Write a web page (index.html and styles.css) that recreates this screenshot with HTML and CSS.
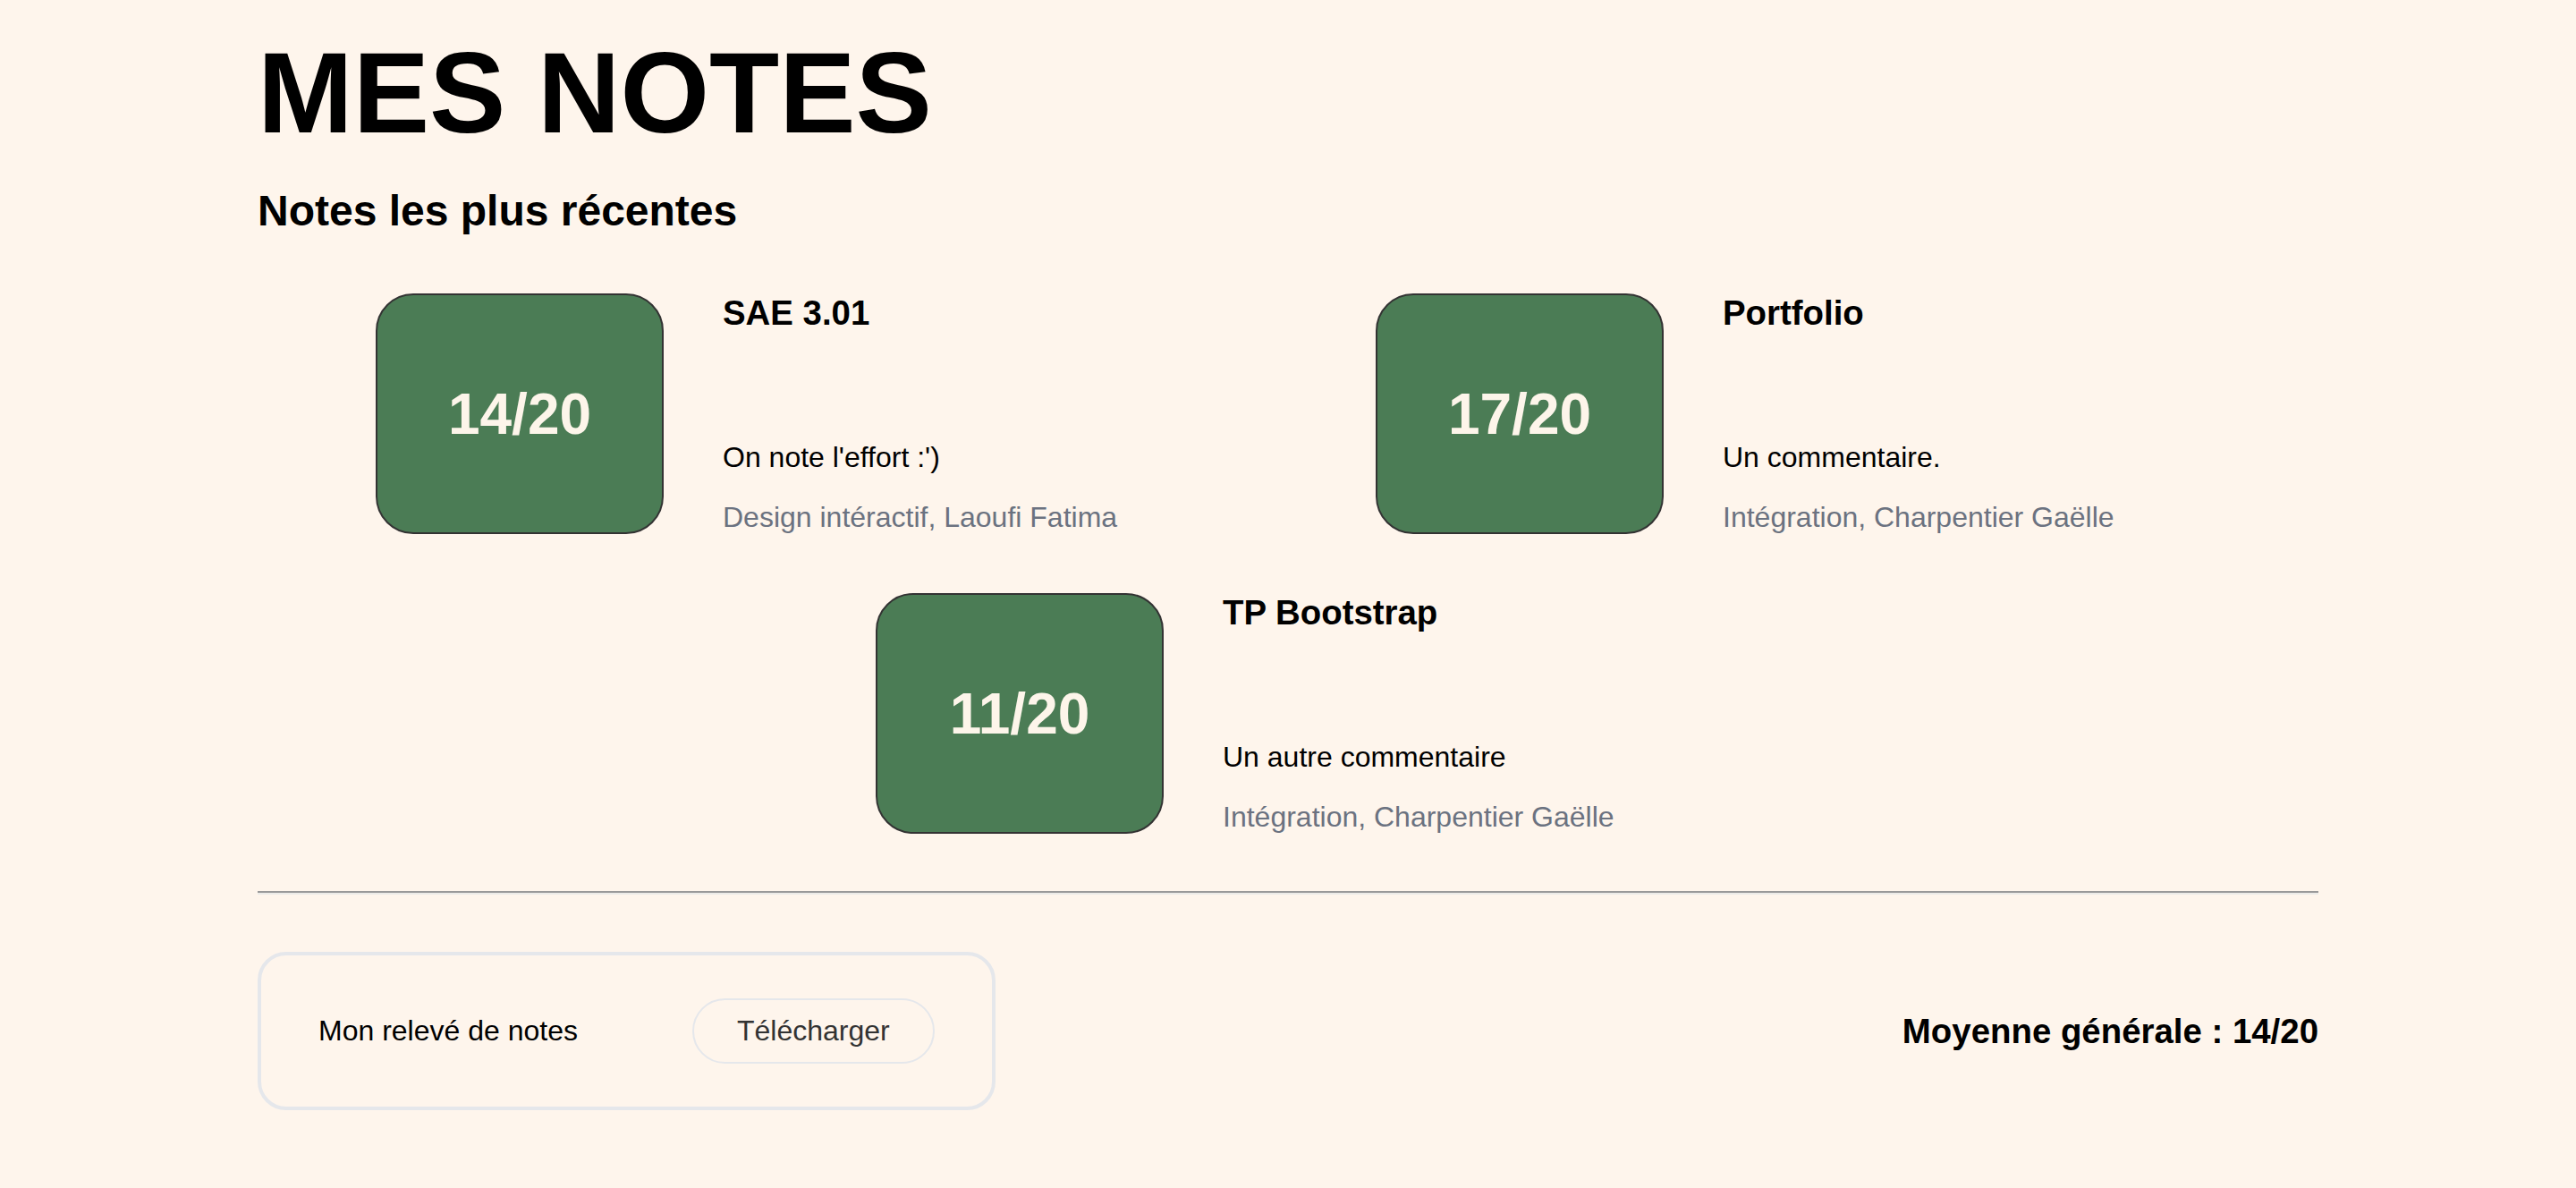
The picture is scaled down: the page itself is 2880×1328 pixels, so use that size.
FILE: index.html
```html
<!DOCTYPE html>
<html lang="fr">
<head>
<meta charset="utf-8">
<title>Mes notes</title>
<link rel="stylesheet" href="styles.css">
</head>
<body>
<main class="page">
  <h1 class="page-title">MES NOTES</h1>
  <h2 class="section-title">Notes les plus récentes</h2>
  <div class="grades">
    <article class="grade-card">
      <div class="grade-box">14/20</div>
      <div class="grade-info">
        <h3 class="grade-name">SAE 3.01</h3>
        <div class="grade-details">
          <p class="grade-comment">On note l'effort :')</p>
          <p class="grade-meta">Design intéractif, Laoufi Fatima</p>
        </div>
      </div>
    </article>
    <article class="grade-card">
      <div class="grade-box">17/20</div>
      <div class="grade-info">
        <h3 class="grade-name">Portfolio</h3>
        <div class="grade-details">
          <p class="grade-comment">Un commentaire.</p>
          <p class="grade-meta">Intégration, Charpentier Gaëlle</p>
        </div>
      </div>
    </article>
    <article class="grade-card">
      <div class="grade-box">11/20</div>
      <div class="grade-info">
        <h3 class="grade-name">TP Bootstrap</h3>
        <div class="grade-details">
          <p class="grade-comment">Un autre commentaire</p>
          <p class="grade-meta">Intégration, Charpentier Gaëlle</p>
        </div>
      </div>
    </article>
  </div>
  <hr class="divider">
  <div class="summary">
    <div class="transcript">
      <span class="transcript-label">Mon relevé de notes</span>
      <button class="transcript-btn" type="button">Télécharger</button>
    </div>
    <p class="average">Moyenne générale : 14/20</p>
  </div>
</main>
</body>
</html>
```

FILE: styles.css
```css
* {
  box-sizing: border-box;
}

html, body {
  margin: 0;
  padding: 0;
  background: #fef5ec;
}

body {
  font-family: "Liberation Sans", Arial, Helvetica, sans-serif;
  color: #000;
  font-size: 16px;
}

.page {
  width: 80%;
  margin: 0 auto;
  padding-top: 30px;
}

.page-title {
  margin: 0;
  font-size: 128px;
  font-weight: 700;
  line-height: normal;
}

.section-title {
  margin: 31px 0 0;
  font-size: 48px;
  font-weight: 700;
  line-height: normal;
}

.grades {
  margin-top: 65px;
  display: flex;
  flex-wrap: wrap;
  justify-content: center;
  column-gap: 196px;
  row-gap: 66px;
}

.grade-card {
  width: 922px;
  display: flex;
  gap: 66px;
}

.grade-box {
  flex: none;
  width: 322px;
  height: 269px;
  border: 2px solid #333;
  border-radius: 42px;
  background: #4b7c55;
  color: #fdf5ea;
  font-size: 64px;
  font-weight: 700;
  display: flex;
  align-items: center;
  justify-content: center;
}

.grade-info {
  display: flex;
  flex-direction: column;
  justify-content: space-between;
}

.grade-name {
  margin: 0;
  font-size: 38.4px;
  font-weight: 700;
  line-height: normal;
}

.grade-details {
  display: flex;
  flex-direction: column;
  gap: 30px;
}

.grade-comment,
.grade-meta {
  margin: 0;
  font-size: 32px;
  line-height: normal;
}

.grade-meta {
  color: #6b7280;
}

.divider {
  margin: 64px 0 0;
  border: 0;
  border-top: 2px solid #999;
  border-bottom: 2px solid #ecebe8;
  height: 0;
}

.summary {
  margin-top: 64px;
  display: flex;
  justify-content: space-between;
  align-items: center;
}

.transcript {
  display: flex;
  align-items: center;
  gap: 128px;
  padding: 48px 64px;
  border: 4px solid #e5e7eb;
  border-radius: 32px;
}

.transcript-label {
  font-size: 32px;
}

.transcript-btn {
  font-family: inherit;
  font-size: 32px;
  line-height: normal;
  color: #333;
  background: transparent;
  border: 2px solid #e5e7eb;
  border-radius: 999px;
  padding: 16px 48px;
}

.average {
  margin: 0;
  font-size: 38.4px;
  font-weight: 700;
}
```
